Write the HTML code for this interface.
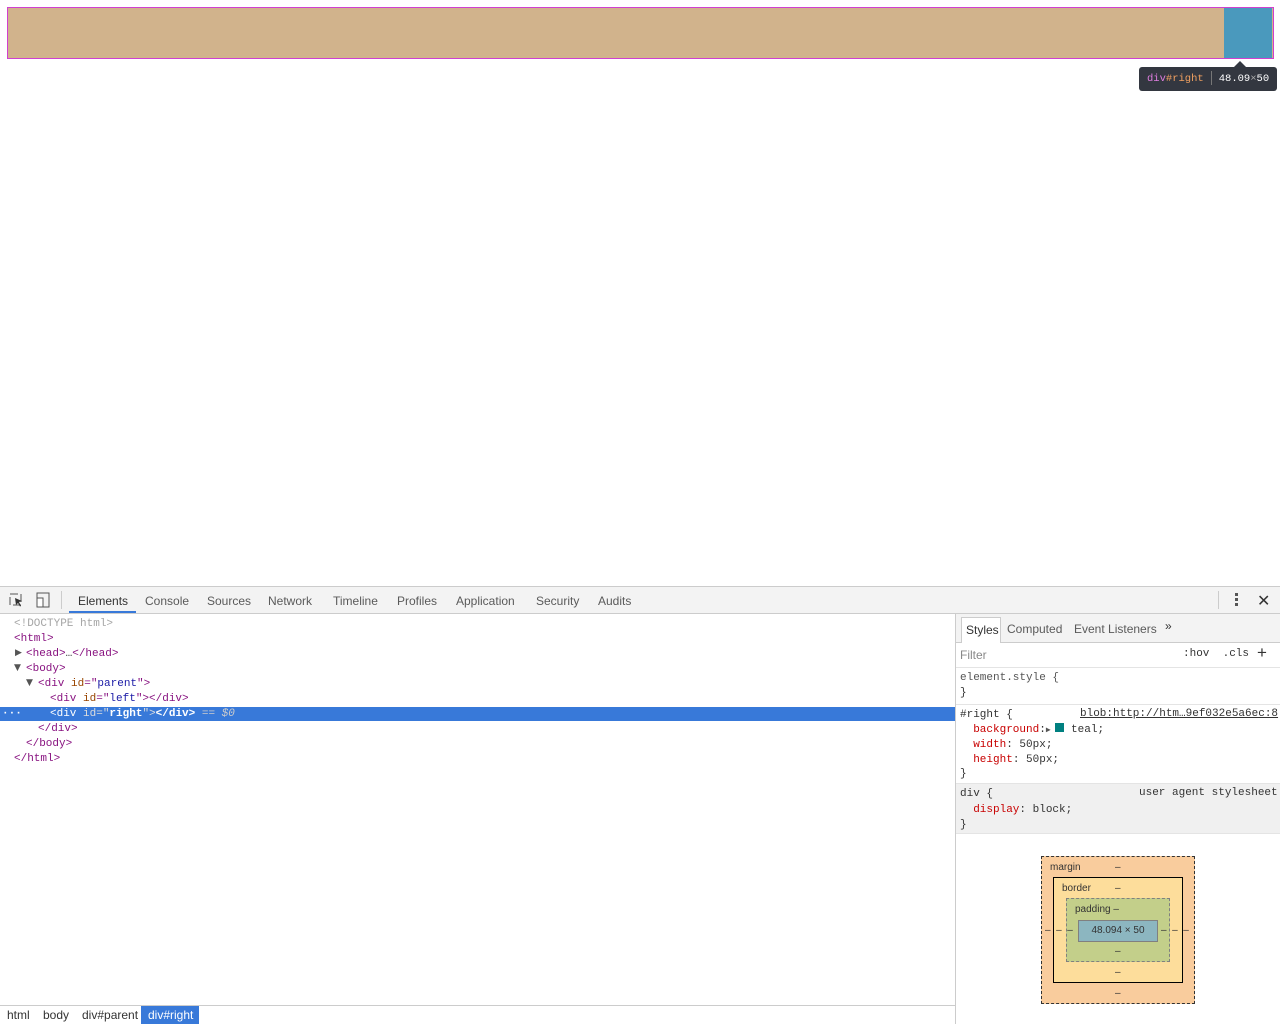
<!DOCTYPE html>
<html><head><style>
*{box-sizing:border-box;margin:0;padding:0}
body{width:1280px;height:1024px;position:relative;background:#fff;font-family:"Liberation Sans",sans-serif;font-size:12px;color:#333;overflow:hidden}
.a{position:absolute;white-space:nowrap}
.m{font-family:"Liberation Mono",monospace;font-size:11px}
.tag{color:#881280}.attr{color:#994500}.val{color:#1a1aa6}.gr{color:#a5a5a5}
.pn{color:#c80000}
.tri{position:absolute;font-size:9px;color:#555;font-family:"DejaVu Sans",sans-serif}
</style></head><body>
<div class="a" style="left:7px;top:7px;width:1267px;height:52px;border:1px solid #d040d0;background:#d1b38c"></div>
<div class="a" style="left:1224px;top:8px;width:48px;height:50px;background:#4a99bd"></div>
<div class="a" style="left:1233px;top:61px;width:0;height:0;border-left:7px solid transparent;border-right:7px solid transparent;border-bottom:7px solid #333740"></div>
<div class="a m" style="left:1139px;top:67px;width:138px;height:24px;background:#333740;border-radius:3px;color:#fff;font-size:10.5px;line-height:24px;padding-left:8px"><span style="color:#e07ee0">div</span><span style="color:#f0a060">#right</span><span style="display:inline-block;width:1px;height:14px;background:#777;margin:0 7px;vertical-align:middle"></span>48.09<span style="color:#aaa">×</span>50</div>

<div class="a" style="left:0;top:586px;width:1280px;height:28px;background:#f3f3f3;border-top:1px solid #ccc;border-bottom:1px solid #ccc"></div>
<svg class="a" style="left:8px;top:592px" width="46" height="16"><rect x="2" y="2" width="11" height="11" fill="none" stroke="#555" stroke-dasharray="8 3"/><path d="M7 6 L14 9 L11 10 L13 14 L12 14.5 L10 11 L8 13 Z" fill="#333"/><rect x="29" y="1" width="12" height="14" fill="none" stroke="#555"/><rect x="29" y="6" width="6" height="9" fill="#fff" stroke="#555"/></svg>
<div class="a" style="left:61px;top:591px;width:1px;height:18px;background:#ccc"></div>
<div class="a" style="top:594px;left:78px;color:#333">Elements</div>
<div class="a" style="left:69px;top:611px;width:67px;height:2px;background:#3879d9"></div>
<div class="a" style="top:594px;left:145px;color:#5a5a5a">Console</div>
<div class="a" style="top:594px;left:207px;color:#5a5a5a">Sources</div>
<div class="a" style="top:594px;left:268px;color:#5a5a5a">Network</div>
<div class="a" style="top:594px;left:333px;color:#5a5a5a">Timeline</div>
<div class="a" style="top:594px;left:397px;color:#5a5a5a">Profiles</div>
<div class="a" style="top:594px;left:456px;color:#5a5a5a">Application</div>
<div class="a" style="top:594px;left:536px;color:#5a5a5a">Security</div>
<div class="a" style="top:594px;left:598px;color:#5a5a5a">Audits</div>
<div class="a" style="left:1218px;top:591px;width:1px;height:18px;background:#ccc"></div>
<div class="a" style="left:1235px;top:593px;width:3px;height:3px;background:#555;box-shadow:0 5px #555,0 10px #555"></div>
<div class="a" style="left:1257px;top:591px;font-size:16px;color:#333">✕</div>

<div class="a m gr" style="left:14px;top:618px">&lt;!DOCTYPE html&gt;</div>
<div class="a m tag" style="left:14px;top:633px">&lt;html&gt;</div>
<span class="tri" style="left:15px;top:648px">▶</span>
<div class="a m" style="left:26px;top:648px"><span class="tag">&lt;head&gt;</span>…<span class="tag">&lt;/head&gt;</span></div>
<span class="tri" style="left:14px;top:663px">▼</span>
<div class="a m tag" style="left:26px;top:663px">&lt;body&gt;</div>
<span class="tri" style="left:26px;top:678px">▼</span>
<div class="a m" style="left:38px;top:678px"><span class="tag">&lt;div </span><span class="attr">id</span><span class="tag">="</span><span class="val">parent</span><span class="tag">"&gt;</span></div>
<div class="a m" style="left:50px;top:693px"><span class="tag">&lt;div </span><span class="attr">id</span><span class="tag">="</span><span class="val">left</span><span class="tag">"&gt;&lt;/div&gt;</span></div>
<div class="a m tag" style="left:38px;top:723px">&lt;/div&gt;</div>
<div class="a m tag" style="left:26px;top:738px">&lt;/body&gt;</div>
<div class="a m tag" style="left:14px;top:753px">&lt;/html&gt;</div>
<div class="a m" style="left:0;top:707px;width:955px;height:14px;background:#3879d9;color:#fff;line-height:14px">
<span style="position:absolute;left:2px;font-weight:bold">···</span><span style="position:absolute;left:50px">&lt;div <span style="color:#ddd">id="</span><b>right</b><span style="color:#ddd">"&gt;</span><b>&lt;/div&gt;</b> <span style="color:#ccc">== <i>$0</i></span></span></div>

<div class="a" style="left:955px;top:614px;width:1px;height:410px;background:#ccc"></div>
<div class="a" style="left:0;top:1005px;width:955px;height:19px;border-top:1px solid #ccc;background:#fff"></div>
<div class="a" style="top:1008px;left:7px;color:#333">html</div>
<div class="a" style="top:1008px;left:43px;color:#333">body</div>
<div class="a" style="top:1008px;left:82px;color:#333">div#parent</div>
<div class="a" style="top:1006px;left:141px;width:58px;height:18px;background:#3879d9;color:#fff;padding:2px 0 0 7px">div#right</div>

<div class="a" style="left:956px;top:614px;width:324px;height:29px;background:#f3f3f3;border-bottom:1px solid #ccc"></div>
<div class="a" style="left:961px;top:617px;width:40px;height:26px;background:#fff;border:1px solid #ccc;border-bottom:none;padding:5px 0 0 4px;color:#333">Styles</div>
<div class="a" style="top:622px;left:1007px;color:#5a5a5a">Computed</div>
<div class="a" style="top:622px;left:1074px;color:#5a5a5a">Event Listeners</div>
<div class="a" style="top:619px;left:1165px;color:#333">»</div>
<div class="a" style="top:648px;left:960px;color:#888">Filter</div>
<div class="a m" style="top:648px;left:1183px;color:#333">:hov &nbsp;.cls</div>
<div class="a" style="top:643px;left:1257px;font-size:17px;color:#333">+</div>
<div class="a" style="left:956px;top:667px;width:324px;height:1px;background:#e4e4e4"></div>
<div class="a m" style="left:960px;top:671px;line-height:15px;color:#555">element.style {<br><span style="color:#333">}</span></div>
<div class="a" style="left:956px;top:704px;width:324px;height:1px;background:#e4e4e4"></div>
<div class="a m" style="left:960px;top:708px;line-height:14.5px;color:#333">#right {<br>&nbsp;&nbsp;<span class="pn">background</span>:<span style="font-size:8px;color:#555">▶ </span><span style="display:inline-block;width:9px;height:9px;background:teal"></span> teal;<br>&nbsp;&nbsp;<span class="pn">width</span>: 50px;<br>&nbsp;&nbsp;<span class="pn">height</span>: 50px;<br>}</div>
<div class="a m" style="left:1080px;top:708px;color:#333;text-decoration:underline">blob:http://htm…9ef032e5a6ec:8</div>
<div class="a" style="left:956px;top:783px;width:324px;height:51px;background:#f0f0f0;border-top:1px solid #e4e4e4;border-bottom:1px solid #e4e4e4"></div>
<div class="a m" style="left:960px;top:787px;line-height:15.5px;color:#333">div {<br>&nbsp;&nbsp;<span class="pn">display</span>: block;<br>}</div>
<div class="a m" style="left:1139px;top:787px;color:#333">user agent stylesheet</div>

<div class="a" style="left:1041px;top:856px;width:154px;height:148px;background:#f9cc9d;border:1px dashed #333"></div>
<div class="a" style="left:1053px;top:877px;width:130px;height:106px;background:#fddd9b;border:1px solid #000"></div>
<div class="a" style="left:1066px;top:898px;width:104px;height:64px;background:#c3cf8a;border:1px dashed #808080"></div>
<div class="a" style="left:1078px;top:920px;width:80px;height:22px;background:#8cb6c0;border:1px solid #808080;font-size:10px;color:#333;text-align:center;line-height:20px">48.094 × 50</div>
<div class="a" style="font-size:10px;color:#333;left:1050px;top:862px">margin</div>
<div class="a" style="font-size:10px;color:#333;left:1062px;top:883px">border</div>
<div class="a" style="font-size:10px;color:#333;left:1075px;top:904px">padding –</div>
<div class="a" style="font-size:10px;color:#333;left:1115px;top:862px">–</div>
<div class="a" style="font-size:10px;color:#333;left:1115px;top:883px">–</div>
<div class="a" style="font-size:10px;color:#333;left:1115px;top:946px">–</div>
<div class="a" style="font-size:10px;color:#333;left:1115px;top:967px">–</div>
<div class="a" style="font-size:10px;color:#333;left:1115px;top:988px">–</div>
<div class="a" style="font-size:10px;color:#333;left:1045px;top:925px">–&nbsp;&nbsp;–&nbsp;&nbsp;–</div>
<div class="a" style="font-size:10px;color:#333;left:1161px;top:925px">–&nbsp;&nbsp;–&nbsp;&nbsp;–</div>
</body></html>
